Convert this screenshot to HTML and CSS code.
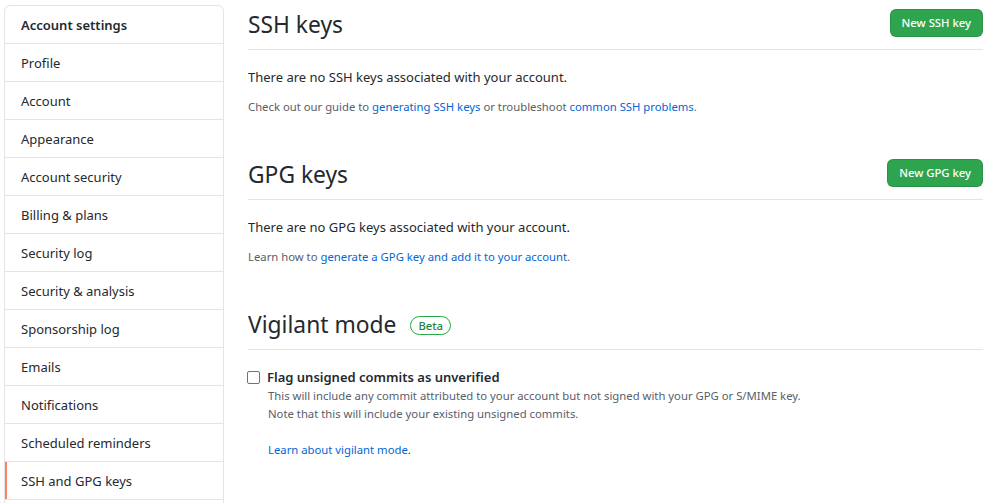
FILE: index.html
```html
<!DOCTYPE html>
<html>
<head>
<meta charset="utf-8">
<link rel="stylesheet" href="styles.css">
</head>
<body>
<div class="layout">
  <nav class="menu">
    <div class="menu-heading">Account settings</div>
    <a class="menu-item">Profile</a>
    <a class="menu-item">Account</a>
    <a class="menu-item">Appearance</a>
    <a class="menu-item">Account security</a>
    <a class="menu-item">Billing &amp; plans</a>
    <a class="menu-item">Security log</a>
    <a class="menu-item">Security &amp; analysis</a>
    <a class="menu-item">Sponsorship log</a>
    <a class="menu-item">Emails</a>
    <a class="menu-item">Notifications</a>
    <a class="menu-item">Scheduled reminders</a>
    <a class="menu-item selected">SSH and GPG keys</a>
  </nav>
  <main class="main">
    <section class="section">
      <div class="subhead">
        <h2 class="subhead-heading">SSH keys</h2>
        <a class="btn">New SSH key</a>
      </div>
      <p class="body-text">There are no SSH keys associated with your account.</p>
      <p class="note">Check out our guide to <a class="link">generating SSH keys</a> or troubleshoot <a class="link">common SSH problems</a>.</p>
    </section>
    <section class="section spacious">
      <div class="subhead">
        <h2 class="subhead-heading">GPG keys</h2>
        <a class="btn">New GPG key</a>
      </div>
      <p class="body-text">There are no GPG keys associated with your account.</p>
      <p class="note">Learn how to <a class="link">generate a GPG key and add it to your account</a>.</p>
    </section>
    <section class="section spacious">
      <div class="subhead">
        <h2 class="subhead-heading">Vigilant mode <span class="label">Beta</span></h2>
      </div>
      <div class="form-checkbox">
        <label class="check-label"><span class="checkbox"></span>Flag unsigned commits as unverified</label>
        <p class="check-note">This will include any commit attributed to your account but not signed with your GPG or S/MIME key.<br>Note that this will include your existing unsigned commits.</p>
        <p class="check-link"><a class="link">Learn about vigilant mode</a>.</p>
      </div>
    </section>
  </main>
</div>
</body>
</html>
```
FILE: styles.css
```css
* { box-sizing: border-box; }
html, body { margin: 0; padding: 0; background: #fff; }
body {
  font-family: "Noto Sans", "Liberation Sans", sans-serif;
  font-size: 13px;
  line-height: 21px;
  color: #24292e;
  overflow: hidden;
}
.layout {
  display: flex;
  gap: 24px;
  padding: 5px 8px 0 4px;
}
.menu {
  flex: 0 0 220px;
  border: 1px solid #e1e4e8;
  border-radius: 6px;
  display: flex;
  flex-direction: column;
  padding-bottom: 40px;
}
.menu-heading {
  padding: 9px 16px 7px;
  font-weight: 600;
  border-bottom: 1px solid #e1e4e8;
}
.menu-item {
  padding: 9px 16px 7px;
  border-bottom: 1px solid #e1e4e8;
  color: #24292e;
}
.menu-item.selected {
  box-shadow: inset 2px 0 0 #f9826c;
}
.main { flex: 1 1 auto; min-width: 0; }
.spacious { margin-top: 39px; }
.subhead {
  display: flex;
  align-items: center;
  padding-bottom: 8px;
  margin-bottom: 16px;
  border-bottom: 1px solid #e1e4e8;
  min-height: 45px;
}
.subhead-heading {
  flex: 1 1 auto;
  margin: 0;
  padding-top: 4px;
  font-size: 22.8px;
  font-weight: 400;
  line-height: 32px;
  display: flex;
  align-items: center;
}
.btn {
  display: inline-block;
  padding: 3px 11px;
  font-size: 11.3px;
  line-height: 20px;
  font-weight: 500;
  color: #fff;
  background: #2ea44f;
  border: 1px solid rgba(27,31,35,.15);
  border-radius: 6px;
  white-space: nowrap;
}
.body-text { margin: 0 0 10px; padding-top: 1px; }
.note {
  margin: 0;
  font-size: 11.3px;
  line-height: 18px;
  color: #586069;
}
.link { color: #0366d6; text-decoration: none; }
.label {
  display: inline-block;
  margin-left: 14px;
  padding: 0 7px;
  font-size: 11.3px;
  font-weight: 500;
  line-height: 17px;
  color: #22863a;
  border: 1px solid #28a745;
  border-radius: 2em;
}
.form-checkbox { padding-left: 20px; padding-top: 1px; }
.check-label {
  display: flex;
  align-items: center;
  font-weight: 600;
  margin-left: -20px;
}
.checkbox {
  width: 13px;
  height: 13px;
  border: 1px solid #6a737d;
  border-radius: 2px;
  margin: 0 7px 0 -1px;
  flex: 0 0 13px;
}
.check-note {
  margin: -1px 0 0;
  font-size: 11.3px;
  line-height: 18px;
  color: #586069;
}
.check-link {
  margin: 18px 0 0;
  font-size: 11.3px;
  line-height: 18px;
}
```
